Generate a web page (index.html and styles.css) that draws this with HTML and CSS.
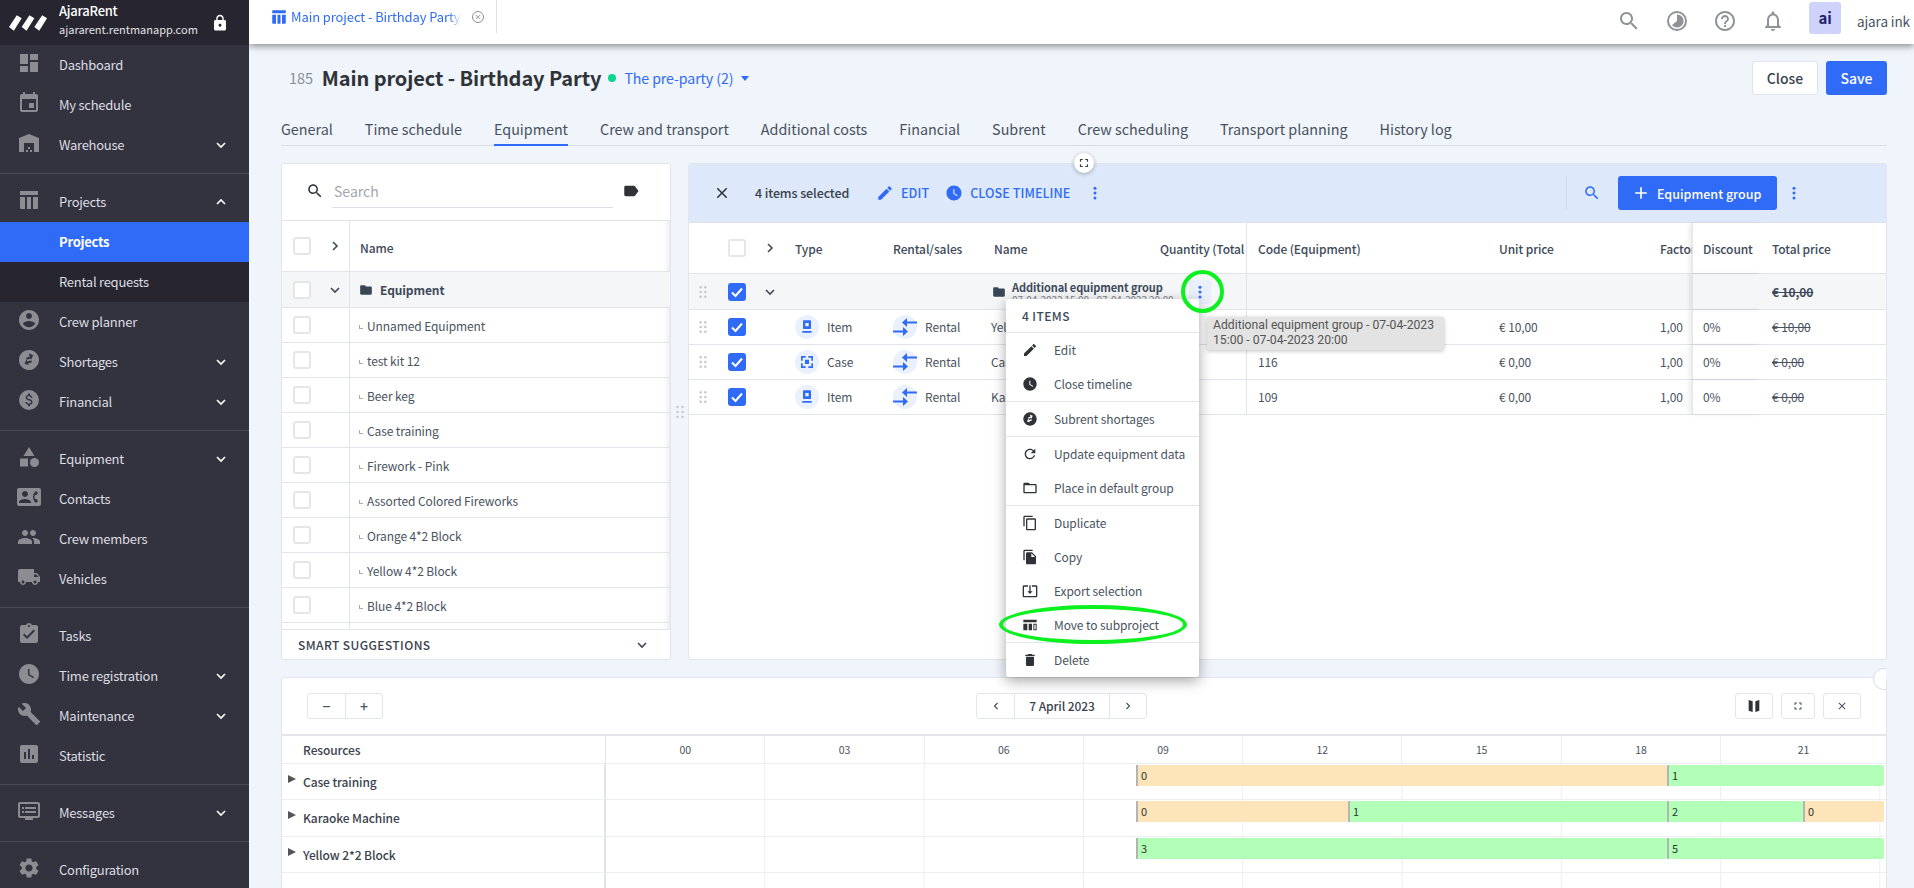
FILE: index.html
```html
<!DOCTYPE html>
<html lang="en">
<head>
    <meta charset="UTF-8">
    <meta name="viewport" content="width=device-width, initial-scale=1.0">
    <link rel="stylesheet" href="styles.css">
    <title>Main project - Birthday Party</title>
</head>
<body>
    <!-- icon sprite -->
    <svg class="sprite" xmlns="http://www.w3.org/2000/svg">
        <symbol id="i-dashboard" viewBox="0 0 24 24"><path d="M3 13h8V3H3v10zm0 8h8v-6H3v6zm10 0h8V11h-8v10zm0-18v6h8V3h-8z"/></symbol>
        <symbol id="i-event" viewBox="0 0 24 24"><path d="M17 12h-5v5h5v-5zM16 1v2H8V1H6v2H5c-1.11 0-1.99.9-1.99 2L3 19c0 1.1.89 2 2 2h14c1.1 0 2-.9 2-2V5c0-1.1-.9-2-2-2h-1V1h-2zm3 18H5V8h14v11z"/></symbol>
        <symbol id="i-warehouse" viewBox="0 0 24 24"><path d="M22 21V7L12 3 2 7v14h5v-9h10v9h5zm-11-2H9v2h2v-2zm2-3h-2v2h2v-2zm2 3h-2v2h2v-2z"/></symbol>
        <symbol id="i-projects" viewBox="0 0 24 24"><path d="M3 3h18v4H3zM3 9h5v12H4a1 1 0 0 1-1-1zM10 9h4v12h-4zM16 9h5v11a1 1 0 0 1-1 1h-4z"/></symbol>
        <symbol id="i-person" viewBox="0 0 24 24"><path d="M12 2C6.48 2 2 6.48 2 12s4.48 10 10 10 10-4.48 10-10S17.52 2 12 2zm0 3c1.66 0 3 1.34 3 3s-1.34 3-3 3-3-1.34-3-3 1.34-3 3-3zm0 14.2c-2.5 0-4.71-1.28-6-3.22.03-1.99 4-3.08 6-3.08 1.99 0 5.97 1.09 6 3.08-1.29 1.94-3.5 3.22-6 3.22z"/></symbol>
        <symbol id="i-swap" viewBox="0 0 24 24"><path transform="rotate(-20 12 12)" d="M12 2C6.48 2 2 6.48 2 12s4.48 10 10 10 10-4.48 10-10S17.52 2 12 2zm2 3.5l3.5 3.5-3.5 3.5V11h-4V9h4V6.5zm-4 11L6.5 14l3.5-3.5V13h4v2h-4v2.5z"/></symbol>
        <symbol id="i-money" viewBox="0 0 24 24"><path fill-rule="evenodd" d="M12 2a10 10 0 1 0 0 20 10 10 0 0 0 0-20zm1 3.6v1.5c1.5.4 2.3 1.5 2.4 2.7h-1.6c0-.9-.5-1.5-1.8-1.5-1.2 0-1.9.5-1.9 1.3 0 .7.5 1.1 2.1 1.5 1.6.4 3.3 1.1 3.3 3.1 0 1.4-1.1 2.2-2.5 2.5v1.5h-2v-1.5c-1.4-.3-2.5-1.2-2.6-2.7h1.6c.1.8.7 1.5 2.1 1.5 1.6 0 1.9-.8 1.9-1.3 0-.7-.4-1.3-2.1-1.7-1.9-.5-3.3-1.3-3.3-2.9 0-1.4 1.1-2.3 2.4-2.6V5.600z"/></symbol>
        <symbol id="i-category" viewBox="0 0 24 24"><path d="M12 2l-5.500 9h11z"/><circle cx="17.500" cy="17.500" r="4.500"/><path d="M3 13.500h8v8H3z"/></symbol>
        <symbol id="i-contact" viewBox="0 0 24 24"><path d="M22 3H2C.9 3 0 3.900 0 5v14c0 1.100.9 2 2 2h20c1.100 0 1.990-.9 1.990-2L24 5c0-1.100-.9-2-2-2zM8 6c1.660 0 3 1.340 3 3s-1.340 3-3 3-3-1.340-3-3 1.340-3 3-3zm6 12H2v-1c0-2 4-3.100 6-3.100s6 1.100 6 3.100v1zm3.850-4h1.640L21 16l-1.990 1.990c-1.310-.98-2.280-2.380-2.730-3.990-.18-.64-.28-1.310-.28-2s.1-1.360.28-2c.45-1.620 1.420-3.010 2.730-3.990L21 8l-1.510 2h-1.640c-.22.63-.35 1.300-.35 2s.13 1.370.35 2z"/></symbol>
        <symbol id="i-people" viewBox="0 0 24 24"><path d="M16 11c1.660 0 2.990-1.340 2.990-3S17.660 5 16 5c-1.660 0-3 1.340-3 3s1.340 3 3 3zm-8 0c1.660 0 2.990-1.340 2.990-3S9.660 5 8 5C6.340 5 5 6.340 5 8s1.340 3 3 3zm0 2c-2.330 0-7 1.170-7 3.500V19h14v-2.500c0-2.330-4.670-3.500-7-3.500zm8 0c-.29 0-.62.02-.97.05 1.160.84 1.970 1.970 1.970 3.450V19h6v-2.500c0-2.330-4.670-3.500-7-3.500z"/></symbol>
        <symbol id="i-truck" viewBox="0 0 24 24"><path d="M20 8h-3V4H3c-1.100 0-2 .9-2 2v11h2c0 1.660 1.340 3 3 3s3-1.340 3-3h6c0 1.660 1.340 3 3 3s3-1.340 3-3h2v-5l-3-4zM6 18.500c-.83 0-1.500-.67-1.500-1.500s.67-1.500 1.500-1.500 1.500.67 1.500 1.500-.67 1.500-1.500 1.500zm13.500-9l1.960 2.500H17V9.500h2.500zm-1.500 9c-.83 0-1.500-.67-1.500-1.500s.67-1.500 1.500-1.500 1.500.67 1.500 1.500-.67 1.500-1.500 1.500z"/></symbol>
        <symbol id="i-task" viewBox="0 0 24 24"><path d="M19 3h-4.180C14.400 1.840 13.300 1 12 1c-1.300 0-2.400.84-2.820 2H5c-1.100 0-2 .9-2 2v14c0 1.100.9 2 2 2h14c1.100 0 2-.9 2-2V5c0-1.100-.9-2-2-2zm-7 0c.55 0 1 .45 1 1s-.45 1-1 1-1-.45-1-1 .45-1 1-1zm-2 14l-4-4 1.410-1.410L10 14.170l6.590-6.590L18 9l-8 8z"/></symbol>
        <symbol id="i-clock" viewBox="0 0 24 24"><path d="M12 2C6.500 2 2 6.500 2 12s4.500 10 10 10 10-4.500 10-10S17.500 2 12 2zm4.200 14.200L11 13V7h1.500v5.200l4.500 2.700-.8 1.300z"/></symbol>
        <symbol id="i-wrench" viewBox="0 0 24 24"><path d="M22.700 19l-9.100-9.100c.9-2.300.4-5-1.500-6.900-2-2-5-2.400-7.400-1.300L9 6 6 9 1.600 4.700C.4 7.100.9 10.100 2.900 12.100c1.900 1.900 4.600 2.400 6.900 1.500l9.100 9.100c.4.4 1 .4 1.400 0l2.300-2.300c.5-.4.5-1.100.1-1.400z"/></symbol>
        <symbol id="i-chart" viewBox="0 0 24 24"><path d="M19 3H5c-1.100 0-2 .9-2 2v14c0 1.100.9 2 2 2h14c1.100 0 2-.9 2-2V5c0-1.100-.9-2-2-2zM9 17H7v-7h2v7zm4 0h-2V7h2v10zm4 0h-2v-4h2v4z"/></symbol>
        <symbol id="i-messages" viewBox="0 0 24 24"><path d="M21 3H3c-1.100 0-2 .9-2 2v12c0 1.100.9 2 2 2h5v2h8v-2h5c1.100 0 1.990-.9 1.990-2L23 5c0-1.100-.9-2-2-2zm0 14H3V5h18v12zM19 8H8v2h11V8zm0 4H8v2h11v-2zM7 8H5v2h2V8zm0 4H5v2h2v-2z"/></symbol>
        <symbol id="i-settings" viewBox="0 0 24 24"><path d="M19.140 12.940c.04-.3.06-.61.06-.94 0-.32-.02-.64-.07-.94l2.030-1.580c.18-.14.23-.41.12-.61l-1.920-3.320c-.12-.22-.37-.29-.59-.22l-2.390.96c-.5-.38-1.030-.7-1.620-.94l-.36-2.540c-.04-.24-.24-.41-.48-.41h-3.840c-.24 0-.43.17-.47.41l-.36 2.540c-.59.24-1.130.57-1.620.94l-2.390-.96c-.22-.08-.47 0-.59.22L2.740 8.870c-.12.21-.08.47.12.61l2.030 1.580c-.05.3-.09.63-.09.94s.02.64.07.94l-2.030 1.580c-.18.14-.23.41-.12.61l1.920 3.320c.12.22.37.29.59.22l2.390-.96c.5.38 1.030.7 1.620.94l.36 2.540c.05.24.24.41.48.41h3.840c.24 0 .44-.17.47-.41l.36-2.540c.59-.24 1.130-.56 1.620-.94l2.390.96c.22.08.47 0 .59-.22l1.920-3.320c.12-.22.07-.47-.12-.61l-2.010-1.580zM12 15.600c-1.980 0-3.600-1.620-3.600-3.600s1.620-3.600 3.600-3.600 3.600 1.620 3.600 3.600-1.620 3.600-3.600 3.600z"/></symbol>
        <symbol id="i-lock" viewBox="0 0 24 24"><path d="M18 8h-1V6c0-2.760-2.240-5-5-5S7 3.240 7 6v2H6c-1.100 0-2 .9-2 2v10c0 1.100.9 2 2 2h12c1.100 0 2-.9 2-2V10c0-1.100-.9-2-2-2zm-6 9c-1.100 0-2-.9-2-2s.9-2 2-2 2 .9 2 2-.9 2-2 2zm3.100-9H8.900V6c0-1.710 1.390-3.100 3.100-3.100 1.710 0 3.100 1.390 3.100 3.100v2z"/></symbol>
        <symbol id="i-search" viewBox="0 0 24 24"><path d="M15.500 14h-.79l-.28-.27C15.410 12.590 16 11.110 16 9.500 16 5.910 13.090 3 9.500 3S3 5.910 3 9.500 5.910 16 9.500 16c1.610 0 3.090-.59 4.230-1.570l.27.28v.79l5 4.990L20.490 19l-4.990-5zm-6 0C7.010 14 5 11.990 5 9.500S7.010 5 9.500 5 14 7.010 14 9.500 11.990 14 9.500 14z"/></symbol>
        <symbol id="i-edit" viewBox="0 0 24 24"><path d="M3 17.250V21h3.750L17.810 9.940l-3.750-3.750L3 17.250zM20.710 7.040c.39-.39.39-1.020 0-1.410l-2.340-2.340c-.39-.39-1.020-.39-1.410 0l-1.830 1.830 3.750 3.750 1.830-1.830z"/></symbol>
        <symbol id="i-refresh" viewBox="0 0 24 24"><path d="M17.650 6.350C16.200 4.900 14.210 4 12 4c-4.420 0-7.990 3.580-7.990 8s3.570 8 7.990 8c3.730 0 6.840-2.550 7.730-6h-2.080c-.82 2.330-3.040 4-5.650 4-3.310 0-6-2.690-6-6s2.690-6 6-6c1.660 0 3.140.69 4.220 1.780L13 11h7V4l-2.350 2.350z"/></symbol>
        <symbol id="i-folder-line" viewBox="0 0 24 24"><path d="M20 6h-8l-2-2H4c-1.100 0-1.990.9-1.990 2L2 18c0 1.100.9 2 2 2h16c1.100 0 2-.9 2-2V8c0-1.100-.9-2-2-2zm0 12H4V8h16v10z"/></symbol>
        <symbol id="i-folder" viewBox="0 0 24 24"><path d="M10 4H4c-1.100 0-1.990.9-1.990 2L2 18c0 1.100.9 2 2 2h16c1.100 0 2-.9 2-2V8c0-1.100-.9-2-2-2h-8l-2-2z"/></symbol>
        <symbol id="i-duplicate" viewBox="0 0 24 24"><path d="M16 1H4c-1.100 0-2 .9-2 2v14h2V3h12V1zm3 4H8c-1.100 0-2 .9-2 2v14c0 1.100.9 2 2 2h11c1.100 0 2-.9 2-2V7c0-1.100-.9-2-2-2zm0 16H8V7h11v14z"/></symbol>
        <symbol id="i-copy" viewBox="0 0 24 24"><path d="M16 1H4c-1.100 0-2 .9-2 2v14h2V3h12V1zm-1 4l6 6v10c0 1.100-.9 2-2 2H7.990C6.890 23 6 22.100 6 21l.01-14c0-1.100.89-2 1.990-2h7zm-1 7h5.500L14 6.500V12z"/></symbol>
        <symbol id="i-export" viewBox="0 0 24 24"><path d="M12 16.500l4-4h-3v-9h-2v9H8l4 4zm9-13h-6v1.990h6v14.030H3V5.490h6V3.500H3c-1.100 0-2 .9-2 2v14c0 1.100.9 2 2 2h18c1.100 0 2-.9 2-2v-14c0-1.100-.9-2-2-2z"/></symbol>
        <symbol id="i-subproject" viewBox="0 0 24 24"><path fill-rule="evenodd" d="M2 4h20v4H2zM2 10h6v10H2zM10 10h5v10h-5zM17 10h5v10h-5zm1.500 1.500v7h2v-7z"/></symbol>
        <symbol id="i-delete" viewBox="0 0 24 24"><path d="M6 19c0 1.100.9 2 2 2h8c1.100 0 2-.9 2-2V7H6v12zM19 4h-3.500l-1-1h-5l-1 1H5v2h14V4z"/></symbol>
        <symbol id="i-help" viewBox="0 0 24 24"><path d="M11 18h2v-2h-2v2zm1-16C6.480 2 2 6.480 2 12s4.480 10 10 10 10-4.480 10-10S17.520 2 12 2zm0 18c-4.410 0-8-3.590-8-8s3.590-8 8-8 8 3.590 8 8-3.590 8-8 8zm0-14c-2.210 0-4 1.790-4 4h2c0-1.100.9-2 2-2s2 .9 2 2c0 2-3 1.750-3 5h2c0-2.250 3-2.500 3-5 0-2.210-1.790-4-4-4z"/></symbol>
        <symbol id="i-bell" viewBox="0 0 24 24"><path d="M12 22c1.100 0 2-.9 2-2h-4c0 1.100.89 2 2 2zm6-6v-5c0-3.070-1.640-5.640-4.500-6.320V4c0-.83-.67-1.500-1.500-1.500s-1.500.67-1.500 1.500v.68C7.630 5.360 6 7.920 6 11v5l-2 2v1h16v-1l-2-2zm-2 1H8v-6c0-2.480 1.510-4.500 4-4.500s4 2.020 4 4.500v6z"/></symbol>
        <symbol id="i-contrast" viewBox="0 0 24 24"><path fill-rule="evenodd" d="M12 2a10 10 0 1 0 0 20 10 10 0 0 0 0-20zm0 2a8 8 0 1 1 0 16 8 8 0 0 1 0-16z"/><path d="M12 5.500a6.500 6.500 0 1 1-5 10.600l5-4.100z"/></symbol>
        <symbol id="i-close" viewBox="0 0 24 24"><path d="M19 6.410L17.590 5 12 10.590 6.410 5 5 6.410 10.590 12 5 17.590 6.410 19 12 13.410 17.590 19 19 17.590 13.410 12z"/></symbol>
        <symbol id="i-tag" viewBox="0 0 24 24"><path d="M17.630 5.840C17.270 5.330 16.670 5 16 5L5 5.010C3.900 5.010 3 5.900 3 7v10c0 1.100.9 1.990 2 1.990L16 19c.67 0 1.270-.33 1.630-.84L22 12l-4.370-6.160z"/></symbol>
        <symbol id="i-fullscreen" viewBox="0 0 24 24"><path d="M7 14H5v5h5v-2H7v-3zm-2-4h2V7h3V5H5v5zm12 7h-3v2h5v-5h-2v3zM14 5v2h3v3h2V5h-5z"/></symbol>
        <symbol id="i-map" viewBox="0 0 24 24"><path d="M4 3l6 2v16l-6-2zM20 3l-6 2v16l6-2z"/></symbol>
        <symbol id="i-plus" viewBox="0 0 24 24"><path d="M19 13h-6v6h-2v-6H5v-2h6V5h2v6h6v2z"/></symbol>
        <symbol id="i-kebab" viewBox="0 0 24 24"><circle cx="12" cy="5.500" r="2"/><circle cx="12" cy="12" r="2"/><circle cx="12" cy="18.500" r="2"/></symbol>
        <symbol id="i-grip" viewBox="0 0 12 18"><circle cx="3" cy="3" r="1.600"/><circle cx="9" cy="3" r="1.600"/><circle cx="3" cy="9" r="1.600"/><circle cx="9" cy="9" r="1.600"/><circle cx="3" cy="15" r="1.600"/><circle cx="9" cy="15" r="1.600"/></symbol>
        <symbol id="i-down" viewBox="0 0 24 24"><path d="M6 9l6 6 6-6" fill="none" stroke="currentColor" stroke-width="2.400"/></symbol>
        <symbol id="i-up" viewBox="0 0 24 24"><path d="M6 15l6-6 6 6" fill="none" stroke="currentColor" stroke-width="2.400"/></symbol>
        <symbol id="i-right" viewBox="0 0 24 24"><path d="M9 6l6 6-6 6" fill="none" stroke="currentColor" stroke-width="2.400"/></symbol>
        <symbol id="i-left" viewBox="0 0 24 24"><path d="M15 6l-6 6 6 6" fill="none" stroke="currentColor" stroke-width="2.400"/></symbol>
        <symbol id="i-check" viewBox="0 0 18 18"><path d="M4 9.500l3.500 3.500L14 5.500" fill="none" stroke="#fff" stroke-width="2"/></symbol>
        <symbol id="i-item" viewBox="0 0 24 24"><path fill-rule="evenodd" d="M7 2h10a1 1 0 0 1 1 1v11a1 1 0 0 1-1 1H7a1 1 0 0 1-1-1V3a1 1 0 0 1 1-1zm2.500 4v5h5V6zM5 18h14v2.500H5z"/></symbol>
        <symbol id="i-case" viewBox="0 0 24 24"><path d="M3 3h7v2.500H5.500V10H3zM14 3h7v7h-2.500V5.500H14zM3 14h2.500v4.500H10V21H3zM18.500 14H21v7h-7v-2.500h4.500zM9 8.500h6V15H9z"/></symbol>
        <symbol id="i-rental" viewBox="0 0 24 24"><path d="M0 15.500h10V12l5 4.500-5 4.500v-3.500H0z"/><path d="M24 6.500H14V3L9 7.500l5 4.500V8.500h10z"/></symbol>
    </svg>

    <div class="sidebar">
        <div class="brand">
            <svg class="brand-logo" viewBox="0 0 40 16"><polygon points="0,12 8,0 13,3 5,16"/><polygon points="13,12 21,0 26,3 18,16"/><polygon points="26,12 34,0 39,3 31,16"/></svg>
            <div class="brand-text">
                <div class="brand-name">AjaraRent</div>
                <div class="brand-url">ajararent.rentmanapp.com</div>
            </div>
            <svg class="brand-lock"><use href="#i-lock"/></svg>
        </div>

        <div class="nav-group first">
            <div class="nav-item"><svg class="nav-icon"><use href="#i-dashboard"/></svg>Dashboard</div>
            <div class="nav-item"><svg class="nav-icon"><use href="#i-event"/></svg>My schedule</div>
            <div class="nav-item"><svg class="nav-icon"><use href="#i-warehouse"/></svg>Warehouse<svg class="nav-arrow"><use href="#i-down"/></svg></div>
        </div>
        <div class="nav-group">
            <div class="nav-item"><svg class="nav-icon"><use href="#i-projects"/></svg>Projects<svg class="nav-arrow"><use href="#i-up"/></svg></div>
            <div class="nav-item sub active">Projects</div>
            <div class="nav-item sub">Rental requests</div>
            <div class="nav-item"><svg class="nav-icon"><use href="#i-person"/></svg>Crew planner</div>
            <div class="nav-item"><svg class="nav-icon"><use href="#i-swap"/></svg>Shortages<svg class="nav-arrow"><use href="#i-down"/></svg></div>
            <div class="nav-item"><svg class="nav-icon"><use href="#i-money"/></svg>Financial<svg class="nav-arrow"><use href="#i-down"/></svg></div>
        </div>
        <div class="nav-group">
            <div class="nav-item"><svg class="nav-icon"><use href="#i-category"/></svg>Equipment<svg class="nav-arrow"><use href="#i-down"/></svg></div>
            <div class="nav-item"><svg class="nav-icon"><use href="#i-contact"/></svg>Contacts</div>
            <div class="nav-item"><svg class="nav-icon"><use href="#i-people"/></svg>Crew members</div>
            <div class="nav-item"><svg class="nav-icon"><use href="#i-truck"/></svg>Vehicles</div>
        </div>
        <div class="nav-group">
            <div class="nav-item"><svg class="nav-icon"><use href="#i-task"/></svg>Tasks</div>
            <div class="nav-item"><svg class="nav-icon"><use href="#i-clock"/></svg>Time registration<svg class="nav-arrow"><use href="#i-down"/></svg></div>
            <div class="nav-item"><svg class="nav-icon"><use href="#i-wrench"/></svg>Maintenance<svg class="nav-arrow"><use href="#i-down"/></svg></div>
            <div class="nav-item"><svg class="nav-icon"><use href="#i-chart"/></svg>Statistic</div>
        </div>
        <div class="nav-group">
            <div class="nav-item"><svg class="nav-icon"><use href="#i-messages"/></svg>Messages<svg class="nav-arrow"><use href="#i-down"/></svg></div>
        </div>
        <div class="nav-group">
            <div class="nav-item"><svg class="nav-icon"><use href="#i-settings"/></svg>Configuration</div>
        </div>
    </div>

    <div class="main">
        <div class="topbar">
            <div class="tab">
                <svg class="tab-icon"><use href="#i-projects"/></svg>
                <span class="tab-title">Main project - Birthday Party</span>
                <span class="tab-close"><svg><use href="#i-close"/></svg></span>
            </div>
            <div class="topbar-right">
                <svg class="top-icon"><use href="#i-search"/></svg>
                <svg class="top-icon"><use href="#i-contrast"/></svg>
                <svg class="top-icon"><use href="#i-help"/></svg>
                <svg class="top-icon"><use href="#i-bell"/></svg>
                <div class="avatar">ai</div>
                <div class="user-name">ajara ink</div>
            </div>
        </div>

        <div class="content">
            <div class="title-row">
                <span class="project-no">185</span>
                <span class="project-title">Main project - Birthday Party</span>
                <span class="status-dot"></span>
                <span class="subproject">The pre-party (2)</span>
                <span class="caret"></span>
                <div class="title-actions">
                    <button class="btn">Close</button>
                    <button class="btn primary">Save</button>
                </div>
            </div>

            <div class="tabs">
                <div class="tabs-item">General</div>
                <div class="tabs-item">Time schedule</div>
                <div class="tabs-item active">Equipment</div>
                <div class="tabs-item">Crew and transport</div>
                <div class="tabs-item">Additional costs</div>
                <div class="tabs-item">Financial</div>
                <div class="tabs-item">Subrent</div>
                <div class="tabs-item">Crew scheduling</div>
                <div class="tabs-item">Transport planning</div>
                <div class="tabs-item">History log</div>
            </div>

            <div class="panels">
                <div class="panel catalog">
                    <div class="catalog-search">
                        <svg class="catalog-search-icon"><use href="#i-search"/></svg>
                        <input class="catalog-input" type="text" placeholder="Search">
                        <svg class="catalog-tag"><use href="#i-tag"/></svg>
                    </div>
                    <div class="catalog-table">
                        <div class="c-row head">
                            <div class="c-check"><span class="checkbox"></span><svg class="chev"><use href="#i-right"/></svg></div>
                            <div class="c-name">Name</div>
                        </div>
                        <div class="c-row group">
                            <div class="c-check"><span class="checkbox"></span><svg class="chev"><use href="#i-down"/></svg></div>
                            <div class="c-name"><svg class="folder"><use href="#i-folder"/></svg>Equipment</div>
                        </div>
                        <div class="c-row"><div class="c-check"><span class="checkbox"></span></div><div class="c-name"><span class="elbow"></span>Unnamed Equipment</div></div>
                        <div class="c-row"><div class="c-check"><span class="checkbox"></span></div><div class="c-name"><span class="elbow"></span>test kit 12</div></div>
                        <div class="c-row"><div class="c-check"><span class="checkbox"></span></div><div class="c-name"><span class="elbow"></span>Beer keg</div></div>
                        <div class="c-row"><div class="c-check"><span class="checkbox"></span></div><div class="c-name"><span class="elbow"></span>Case training</div></div>
                        <div class="c-row"><div class="c-check"><span class="checkbox"></span></div><div class="c-name"><span class="elbow"></span>Firework - Pink</div></div>
                        <div class="c-row"><div class="c-check"><span class="checkbox"></span></div><div class="c-name"><span class="elbow"></span>Assorted Colored Fireworks</div></div>
                        <div class="c-row"><div class="c-check"><span class="checkbox"></span></div><div class="c-name"><span class="elbow"></span>Orange 4*2 Block</div></div>
                        <div class="c-row"><div class="c-check"><span class="checkbox"></span></div><div class="c-name"><span class="elbow"></span>Yellow 4*2 Block</div></div>
                        <div class="c-row"><div class="c-check"><span class="checkbox"></span></div><div class="c-name"><span class="elbow"></span>Blue 4*2 Block</div></div>
                        <div class="c-row"><div class="c-check"></div><div class="c-name"></div></div>
                    </div>
                    <div class="suggestions">SMART SUGGESTIONS<svg class="chev"><use href="#i-down"/></svg></div>
                </div>

                <div class="panel selection">
                    <div class="select-bar">
                        <svg class="select-x"><use href="#i-close"/></svg>
                        <span class="select-count">4 items selected</span>
                        <svg class="link-icon"><use href="#i-edit"/></svg><span class="link-text">EDIT</span>
                        <svg class="link-icon clock"><use href="#i-clock"/></svg><span class="link-text">CLOSE TIMELINE</span>
                        <svg class="kebab bar-kebab"><use href="#i-kebab"/></svg>
                        <div class="select-bar-right">
                            <svg class="link-icon"><use href="#i-search"/></svg>
                            <button class="btn add-group"><svg><use href="#i-plus"/></svg>Equipment group</button>
                            <svg class="kebab"><use href="#i-kebab"/></svg>
                        </div>
                    </div>

                    <div class="t-row t-head">
                        <div class="t-lead"><span class="checkbox"></span><svg class="chev"><use href="#i-right"/></svg></div>
                        <div>Type</div>
                        <div>Rental/sales</div>
                        <div class="t-pad">Name</div>
                        <div class="t-qty">Quantity (Total in project)</div>
                        <div class="t-code">Code (Equipment)</div>
                        <div class="t-unit">Unit price</div>
                        <div class="t-factor">Factor</div>
                        <div class="t-disc">Discount</div>
                        <div class="t-total">Total price</div>
                    </div>

                    <div class="t-row t-group">
                        <div class="t-lead"><svg class="grip"><use href="#i-grip"/></svg><span class="checkbox on"><svg><use href="#i-check"/></svg></span><svg class="chev"><use href="#i-down"/></svg></div>
                        <div></div>
                        <div></div>
                        <div class="t-groupname">
                            <svg class="folder"><use href="#i-folder"/></svg>
                            <div>
                                <div class="group-title">Additional equipment group</div>
                                <div class="group-date">07-04-2023 15:00 - 07-04-2023 20:00</div>
                            </div>
                        </div>
                        <div class="t-qty"><span class="row-kebab"><svg class="kebab"><use href="#i-kebab"/></svg></span></div>
                        <div class="t-code"></div>
                        <div class="t-unit"></div>
                        <div class="t-factor"></div>
                        <div class="t-disc"></div>
                        <div class="t-total"><s>€ 10,00</s></div>
                    </div>

                    <div class="t-row">
                        <div class="t-lead"><svg class="grip"><use href="#i-grip"/></svg><span class="checkbox on"><svg><use href="#i-check"/></svg></span></div>
                        <div class="t-icon-cell"><span class="round"><svg><use href="#i-item"/></svg></span>Item</div>
                        <div class="t-icon-cell"><span class="round"><svg class="rental"><use href="#i-rental"/></svg></span>Rental</div>
                        <div>Yellow 2*2 Block</div>
                        <div class="t-qty"></div>
                        <div class="t-code"></div>
                        <div class="t-unit">€ 10,00</div>
                        <div class="t-factor">1,00</div>
                        <div class="t-disc">0%</div>
                        <div class="t-total"><s>€ 10,00</s></div>
                    </div>
                    <div class="t-row">
                        <div class="t-lead"><svg class="grip"><use href="#i-grip"/></svg><span class="checkbox on"><svg><use href="#i-check"/></svg></span></div>
                        <div class="t-icon-cell"><span class="round"><svg><use href="#i-case"/></svg></span>Case</div>
                        <div class="t-icon-cell"><span class="round"><svg class="rental"><use href="#i-rental"/></svg></span>Rental</div>
                        <div>Case training</div>
                        <div class="t-qty"></div>
                        <div class="t-code">116</div>
                        <div class="t-unit">€ 0,00</div>
                        <div class="t-factor">1,00</div>
                        <div class="t-disc">0%</div>
                        <div class="t-total"><s>€ 0,00</s></div>
                    </div>
                    <div class="t-row">
                        <div class="t-lead"><svg class="grip"><use href="#i-grip"/></svg><span class="checkbox on"><svg><use href="#i-check"/></svg></span></div>
                        <div class="t-icon-cell"><span class="round"><svg><use href="#i-item"/></svg></span>Item</div>
                        <div class="t-icon-cell"><span class="round"><svg class="rental"><use href="#i-rental"/></svg></span>Rental</div>
                        <div>Karaoke Machine</div>
                        <div class="t-qty"></div>
                        <div class="t-code">109</div>
                        <div class="t-unit">€ 0,00</div>
                        <div class="t-factor">1,00</div>
                        <div class="t-disc">0%</div>
                        <div class="t-total"><s>€ 0,00</s></div>
                    </div>
                </div>
            </div>

            <div class="panel timeline">
                <div class="timeline-tools">
                    <div class="btn-group">
                        <span class="tool">&minus;</span>
                        <span class="tool">+</span>
                    </div>
                    <div class="btn-group date-group">
                        <span class="tool"><svg><use href="#i-left"/></svg></span>
                        <span class="tool date">7 April 2023</span>
                        <span class="tool"><svg><use href="#i-right"/></svg></span>
                    </div>
                    <div class="tools-right">
                        <span class="tool single"><svg class="dark"><use href="#i-map"/></svg></span>
                        <span class="tool single narrow"><svg><use href="#i-fullscreen"/></svg></span>
                        <span class="tool single"><svg><use href="#i-close"/></svg></span>
                    </div>
                </div>
                <div class="g-row g-head">
                    <div class="g-res">Resources</div>
                    <div class="g-hours">
                        <span>00</span><span>03</span><span>06</span><span>09</span><span>12</span><span>15</span><span>18</span><span>21</span>
                    </div>
                </div>
                <div class="g-row">
                    <div class="g-res"><i class="tri"></i>Case training</div>
                    <div class="g-lane">
                        <div class="bar low" style="width:531px">0</div>
                        <div class="bar ok last">1</div>
                    </div>
                </div>
                <div class="g-row tall">
                    <div class="g-res"><i class="tri"></i>Karaoke Machine</div>
                    <div class="g-lane">
                        <div class="bar low" style="width:212px">0</div>
                        <div class="bar ok" style="width:319px">1</div>
                        <div class="bar ok" style="width:136px">2</div>
                        <div class="bar low last">0</div>
                    </div>
                </div>
                <div class="g-row">
                    <div class="g-res"><i class="tri"></i>Yellow 2*2 Block</div>
                    <div class="g-lane">
                        <div class="bar ok" style="width:531px">3</div>
                        <div class="bar ok last">5</div>
                    </div>
                </div>
                <div class="g-row">
                    <div class="g-res"></div>
                    <div class="g-lane"></div>
                </div>
            </div>
        </div>

        <!-- overlays -->
        <span class="expand-btn"><svg><use href="#i-fullscreen"/></svg></span>
        <span class="corner-btn"></span>
        <svg class="resize-grip"><use href="#i-grip"/></svg>

        <div class="menu">
            <div class="menu-title">4 ITEMS</div>
            <div class="menu-section">
                <div class="menu-item"><svg><use href="#i-edit"/></svg>Edit</div>
                <div class="menu-item"><svg><use href="#i-clock"/></svg>Close timeline</div>
            </div>
            <div class="menu-section">
                <div class="menu-item"><svg><use href="#i-swap"/></svg>Subrent shortages</div>
            </div>
            <div class="menu-section">
                <div class="menu-item"><svg><use href="#i-refresh"/></svg>Update equipment data</div>
                <div class="menu-item"><svg><use href="#i-folder-line"/></svg>Place in default group</div>
            </div>
            <div class="menu-section">
                <div class="menu-item"><svg><use href="#i-duplicate"/></svg>Duplicate</div>
                <div class="menu-item"><svg><use href="#i-copy"/></svg>Copy</div>
                <div class="menu-item"><svg><use href="#i-export"/></svg>Export selection</div>
                <div class="menu-item"><svg><use href="#i-subproject"/></svg>Move to subproject</div>
            </div>
            <div class="menu-section">
                <div class="menu-item"><svg><use href="#i-delete"/></svg>Delete</div>
            </div>
        </div>

        <div class="tooltip">Additional equipment group - 07-04-2023<br>15:00 - 07-04-2023 20:00</div>

        <span class="mark mark-kebab"></span>
        <span class="mark mark-move"></span>
    </div>
</body>
</html>
```

FILE: styles.css
```css
* {
    box-sizing: border-box;
}

body {
    margin: 0;
    display: flex;
    height: 100vh;
    overflow: hidden;
    font-family: "Noto Sans CJK SC", "Noto Sans", sans-serif;
    font-size: 12px;
    letter-spacing: -0.1px;
    line-height: 20px;
    color: #4a5360;
    background-color: #f0f4fb;
}

svg {
    fill: currentColor;
}

.sprite {
    display: none;
}

/* sidebar */

.sidebar {
    flex: 0 0 249px;
    min-width: 0;
    height: 888px;
    background-color: #33333f;
    color: #dcdce2;
    font-size: 13px;
    letter-spacing: -0.25px;
    position: relative;
    z-index: 5;
}

.brand {
    display: flex;
    align-items: center;
    height: 45px;
    padding: 0 20px 0 9px;
    background-color: #272630;
    color: #fff;
}

.brand-logo {
    flex: none;
    width: 39px;
    height: 16px;
    fill: #fff;
    margin: 0 11px 0 0;
}

.brand-text {
    flex: 1;
    min-width: 0;
    margin-top: -5px;
}

.brand-name {
    font-weight: 500;
    line-height: 17px;
}

.brand-url {
    font-size: 11px;
    line-height: 20px;
    letter-spacing: 0;
    color: #e2e2e6;
}

.brand-lock {
    flex: none;
    width: 18px;
    height: 18px;
}

.nav-group {
    padding: 8px 0;
    border-bottom: 1px solid #4b4b57;
}

.nav-group.first {
    padding-top: 0;
}

.nav-group:last-child {
    border-bottom: none;
}

.nav-item {
    display: flex;
    align-items: center;
    height: 40px;
    padding-left: 59px;
    position: relative;
}

.nav-item.sub {
    background-color: #272630;
}

.nav-item.active {
    background-color: #2f6bf6;
    color: #fff;
    font-weight: 700;
}

.nav-icon {
    position: absolute;
    left: 17px;
    top: 6px;
    width: 24px;
    height: 24px;
    color: #8c8c92;
}

.nav-arrow {
    position: absolute;
    left: 213px;
    top: 12px;
    width: 16px;
    height: 16px;
    color: #fff;
}

/* top bar */

.main {
    flex: 1;
    display: flex;
    flex-direction: column;
    position: relative;
    min-width: 0;
    height: 888px;
    overflow: hidden;
}

.topbar {
    flex: 0 0 44px;
    display: flex;
    align-items: center;
    background-color: #fff;
    box-shadow: 0 2px 7px rgba(0, 0, 0, 0.45);
    position: relative;
    z-index: 4;
}

.tab {
    display: flex;
    align-items: center;
    align-self: flex-start;
    width: 248px;
    height: 33px;
    padding-left: 21px;
    border-right: 1px solid #dfe2e6;
    color: #2f6bf6;
}

.tab-icon {
    flex: none;
    width: 18px;
    height: 18px;
    margin-right: 3px;
}

.tab-title {
    width: 171px;
    white-space: nowrap;
    overflow: hidden;
    font-size: 13px;
    mask-image: linear-gradient(to right, #000 92%, transparent);
}

.tab-close {
    flex: none;
    display: flex;
    align-items: center;
    justify-content: center;
    width: 12px;
    height: 12px;
    margin-left: 10px;
    border: 1px solid #8b8f96;
    border-radius: 50%;
    color: #8b8f96;
}

.tab-close svg {
    width: 8px;
    height: 8px;
}

.topbar-right {
    display: flex;
    align-items: center;
    margin-left: auto;
    padding-right: 7px;
    color: #8f9296;
}

.top-icon {
    width: 24px;
    height: 24px;
    margin-right: 24px;
    margin-top: -3px;
}

.avatar {
    width: 32px;
    height: 32px;
    border-radius: 3px;
    background-color: #cfd3fb;
    color: #221f70;
    font-weight: 700;
    font-size: 15px;
    line-height: 32px;
    text-align: center;
    margin-top: -9px;
}

.user-name {
    width: 50px;
    margin-left: 16px;
    font-size: 13.5px;
    color: #4a5360;
    margin-top: -3px;
    white-space: nowrap;
}

/* project header */

.content {
    padding: 17px 27px 0 32px;
}

.title-row {
    display: flex;
    align-items: center;
    height: 34px;
}

.project-no {
    margin-left: 8px;
    font-size: 14.5px;
    color: #8a8f96;
}

.project-title {
    margin-left: 9px;
    font-size: 20px;
    font-weight: 700;
    color: #2f3338;
}

.status-dot {
    width: 8px;
    height: 8px;
    margin-left: 7px;
    border-radius: 50%;
    background-color: #0bd68b;
}

.subproject {
    margin-left: 8px;
    font-size: 14.2px;
    color: #2f6bf6;
}

.caret {
    margin-left: 8px;
    border-top: 5px solid #2f6bf6;
    border-left: 4px solid transparent;
    border-right: 4px solid transparent;
}

.title-actions {
    display: flex;
    gap: 8px;
    margin-left: auto;
}

.btn {
    height: 34px;
    width: 66px;
    border: 1px solid #e0e3e8;
    border-radius: 3px;
    background-color: #fff;
    font-family: inherit;
    font-size: 14px;
    font-weight: 500;
    color: #3a424d;
}

.btn.primary {
    width: 61px;
    border: none;
    background-color: #2f6bf6;
    color: #fff;
}

.tabs {
    display: flex;
    gap: 32px;
    height: 33px;
    margin-top: 18px;
    border-bottom: 1px solid #d9dce2;
    font-size: 14.34px;
    letter-spacing: 0;
    color: #47505c;
}

.tabs-item {
    height: 33px;
    line-height: 32px;
}

.tabs-item.active {
    border-bottom: 2px solid #2f6bf6;
}

/* panels */

.panels {
    display: flex;
    gap: 17px;
    height: 497px;
    margin-top: 17px;
}

.panel {
    background-color: #fff;
    border: 1px solid #e1e4e9;
    border-radius: 3px;
}

.catalog {
    flex: 0 0 390px;
    display: flex;
    flex-direction: column;
    overflow: hidden;
}

.catalog-search {
    flex: 0 0 57px;
    display: flex;
    align-items: center;
    padding-left: 24px;
    border-bottom: 1px solid #e1e4e9;
}

.catalog-search-icon {
    flex: none;
    width: 18px;
    height: 18px;
    color: #2f3338;
    margin-top: -2px;
}

.catalog-input {
    width: 281px;
    height: 32px;
    margin-left: 8px;
    padding: 0 2px 2px;
    border: none;
    border-bottom: 1px solid #dcdfe4;
    outline: none;
    font-family: inherit;
    font-size: 14px;
    color: #4a5360;
}

.catalog-input::placeholder {
    color: #a4a7ab;
}

.catalog-tag {
    flex: none;
    width: 18px;
    height: 18px;
    margin: -3px 0 0 9px;
    color: #2f3338;
}

.catalog-table {
    flex: 1;
    overflow: hidden;
    box-shadow: inset -6px 0 6px -5px rgba(0, 0, 0, 0.12);
}

.c-row {
    display: flex;
    height: 35px;
    border-bottom: 1px solid #e1e4e9;
}

.c-row.head {
    height: 51px;
    font-weight: 500;
    color: #3e4a5a;
}

.c-row.group {
    height: 36px;
    background-color: #f5f6f8;
    font-weight: 700;
    color: #3e4a5a;
}

.c-check {
    flex: 0 0 68px;
    display: flex;
    align-items: center;
    padding-left: 11px;
    border-right: 1px solid #e1e4e9;
}

.c-name {
    flex: 1;
    display: flex;
    align-items: center;
    padding: 1px 0 0 9px;
}

.head .c-name {
    padding: 3px 0 0 10px;
}

.checkbox {
    flex: none;
    width: 18px;
    height: 18px;
    border: 2px solid #e4e6ea;
    border-radius: 3px;
    background-color: #fff;
}

.checkbox.on {
    border: none;
    background-color: #2f6bf6;
}

.checkbox svg {
    display: block;
    width: 18px;
    height: 18px;
}

.chev {
    flex: none;
    width: 16px;
    height: 16px;
    margin-left: 16px;
    color: #3e4a5a;
}

.folder {
    flex: none;
    width: 14px;
    height: 14px;
    margin-right: 7px;
    color: #3a4656;
}

.elbow {
    flex: none;
    width: 4px;
    height: 4px;
    margin: 2px 4px 0 0;
    border-left: 1px solid #a8acb2;
    border-bottom: 1px solid #a8acb2;
}

.suggestions {
    flex: 0 0 30px;
    display: flex;
    align-items: center;
    justify-content: space-between;
    padding: 0 20px 0 16px;
    border-top: 1px solid #e1e4e9;
    font-weight: 500;
    letter-spacing: 0.4px;
    color: #3a424d;
}

.suggestions .chev {
    margin: 0;
}

.selection {
    flex: 1;
    min-width: 0;
    overflow: hidden;
}

.select-bar {
    display: flex;
    align-items: center;
    height: 59px;
    padding-left: 24px;
    background-color: #dde9fa;
    border-bottom: 1px solid #dfe3e8;
    color: #2f6bf6;
}

.select-x {
    flex: none;
    width: 18px;
    height: 18px;
    color: #2f3338;
}

.select-count {
    margin: 0 25px 0 24px;
    font-weight: 500;
    color: #3a424d;
    width: 96px;
    white-space: nowrap;
    font-size: 12.5px;
}

.link-icon {
    flex: none;
    width: 18px;
    height: 18px;
}

.link-icon.clock {
    margin-left: 16px;
}

.link-text {
    margin-left: 7px;
    font-size: 12.6px;
    font-weight: 500;
    letter-spacing: 0.05px;
}

.kebab {
    flex: none;
    width: 18px;
    height: 18px;
    color: #2f6bf6;
}

.bar-kebab {
    margin-left: 16px;
}

.select-bar-right {
    display: flex;
    align-items: center;
    height: 34px;
    margin-left: auto;
    padding: 0 83px 0 16px;
    border-left: 1px solid #d3dcea;
}

.btn.add-group {
    display: flex;
    align-items: center;
    flex: none;
    width: 159px;
    height: 34px;
    margin: 0 8px 0 17px;
    padding-left: 13px;
    border: none;
    background-color: #2f6bf6;
    color: #fff;
    font-size: 12.5px;
    font-weight: 500;
    white-space: nowrap;
}

.add-group svg {
    flex: none;
    width: 20px;
    height: 20px;
    margin-right: 6px;
}

.t-row {
    display: grid;
    grid-template-columns: 106px 98px 98px 169px 87px 241px 162px 42px 70px 1fr;
    align-items: center;
    height: 35px;
    border-bottom: 1px solid #e1e4e9;
    white-space: nowrap;
}

.t-row > div {
    height: 100%;
    display: flex;
    align-items: center;
    overflow: hidden;
}

.t-head {
    height: 51px;
    font-weight: 500;
    color: #3e4a5a;
}

.t-row.t-head > div:not(.t-lead) {
    padding-top: 2px;
}

.t-group {
    height: 36px;
    background-color: #f5f6f8;
}

.t-row > .t-lead {
    padding-left: 7px;
    overflow: visible;
}

.t-row.t-head > .t-lead {
    padding-left: 39px;
}

.t-lead .grip {
    flex: none;
    width: 14px;
    height: 14px;
    margin-right: 18px;
    color: #c4c7cc;
}

.t-pad {
    padding-left: 3px;
}

.t-qty {
    border-right: 1px solid #e1e4e9;
}

.t-code {
    padding-left: 11px;
}

.t-unit {
    padding-left: 11px;
}

.t-factor {
    padding-left: 10px;
}

.t-row > .t-disc {
    padding-left: 10px;
    border-left: 1px solid #e1e4e9;
    box-shadow: -3px 0 4px rgba(0, 0, 0, 0.08);
    overflow: visible;
}

.t-total {
    padding-left: 10px;
}

.t-group .t-total {
    font-weight: 700;
    color: #3e4a5a;
}

.t-row > .t-groupname {
    overflow: visible;
    padding-left: 1px;
}

.t-groupname .folder {
    margin-right: 6px;
}

.group-title {
    font-size: 11px;
    font-weight: 700;
    line-height: 13px;
    color: #3e4a5a;
    margin-top: 3px;
}

.group-date {
    font-size: 10px;
    line-height: 12px;
    color: #7c838c;
}

.row-kebab {
    flex: none;
    display: flex;
    align-items: center;
    justify-content: center;
    width: 22px;
    height: 24px;
    margin-left: 29px;
    border-radius: 3px;
    background-color: #e9effb;
}

.t-icon-cell {
    gap: 8px;
}

.round {
    flex: none;
    display: flex;
    align-items: center;
    justify-content: center;
    width: 24px;
    height: 24px;
    border-radius: 50%;
    background-color: #eaf1fd;
    color: #2f6bf6;
}

.round svg {
    width: 16px;
    height: 16px;
}

.round svg.rental {
    width: 24px;
    height: 24px;
}

/* timeline */

.timeline {
    margin-top: 17px;
    height: 240px;
    position: relative;
}

.timeline-tools {
    display: flex;
    align-items: center;
    height: 58px;
    padding: 0 25px;
    border-bottom: 2px solid #e4e6ea;
    position: relative;
}

.btn-group {
    display: flex;
    height: 26px;
    border: 1px solid #e1e4e9;
    border-radius: 3px;
}

.tool {
    display: flex;
    align-items: center;
    justify-content: center;
    width: 37px;
    color: #4a5360;
    font-size: 14px;
    font-weight: 500;
    border-left: 1px solid #e1e4e9;
}

.tool:first-child {
    border-left: none;
}

.tool svg {
    width: 12px;
    height: 12px;
}

.date-group {
    margin-left: 593px;
}

.tool.date {
    width: 95px;
    font-size: 12px;
    font-weight: 500;
    color: #3a424d;
}

.tools-right {
    display: flex;
    gap: 8px;
    margin-left: auto;
}

.tool.single {
    height: 26px;
    width: 38px;
    border: 1px solid #e1e4e9;
    border-radius: 3px;
}

.tool.single.narrow {
    width: 34px;
}

.tool.single .dark {
    width: 16px;
    height: 16px;
    color: #2f3338;
}

.g-row {
    display: flex;
    height: 36px;
}

.g-row.tall {
    height: 37px;
}

.g-head {
    height: 28px;
}

.g-res {
    flex: 0 0 324px;
    display: flex;
    align-items: center;
    padding-left: 21px;
    border-right: 2px solid #e1e4e9;
    border-bottom: 1px solid #eceef1;
    position: relative;
    font-weight: 500;
    color: #3a424d;
    font-size: 12px;
}

.g-head .g-res {
    border-right-width: 1px;
}

.tri {
    position: absolute;
    left: 6px;
    top: 11px;
    border-left: 8px solid #555;
    border-top: 4.500px solid transparent;
    border-bottom: 4.500px solid transparent;
}

.g-hours {
    flex: 1;
    display: flex;
    border-bottom: 1px solid #eceef1;
}

.g-hours span {
    flex: 0 0 159.300px;
    font-size: 10.5px;
    line-height: 28px;
    text-align: center;
    color: #4a5360;
    border-right: 1px solid #eceef1;
}

.g-hours span:last-child {
    flex: 1;
    border-right: none;
}

.g-lane {
    flex: 1;
    display: flex;
    align-items: flex-start;
    padding: 1px 2px 0 530px;
    border-bottom: 1px solid #eceef1;
    background-image: linear-gradient(to right, transparent 158.300px, #eceef1 158.300px);
    background-size: 159.300px 100%;
}

.bar {
    height: 21px;
    padding-left: 3px;
    border-left: 2px solid #b4b4b4;
    border-radius: 0 2px 2px 0;
    font-size: 11px;
    line-height: 21px;
    color: #333;
}

.bar.low {
    background-color: #fde4b9;
}

.bar.ok {
    background-color: #b2ffb8;
}

.bar.last {
    flex: 1;
}

/* overlays */

.expand-btn {
    position: absolute;
    left: 825px;
    top: 153px;
    display: flex;
    align-items: center;
    justify-content: center;
    width: 20px;
    height: 20px;
    border-radius: 50%;
    background-color: #fff;
    box-shadow: 0 1px 4px rgba(0, 0, 0, 0.3);
    color: #3a424d;
}

.expand-btn svg {
    width: 14px;
    height: 14px;
}

.corner-btn {
    position: absolute;
    left: 1624px;
    top: 668px;
    width: 22px;
    height: 22px;
    border-radius: 50%;
    background-color: #fff;
    border: 1px solid #d9dce2;
    clip-path: inset(0 9px 0 0);
}

.resize-grip {
    position: absolute;
    left: 426px;
    top: 396px;
    width: 10px;
    height: 32px;
    color: #c9ccd2;
}

.menu {
    position: absolute;
    left: 757px;
    top: 299px;
    width: 193px;
    background-color: #fff;
    border-radius: 3px;
    box-shadow: 0 4px 14px rgba(0, 0, 0, 0.35);
    z-index: 6;
}

.menu-title {
    height: 34px;
    padding-left: 16px;
    border-bottom: 1px solid #e1e4e9;
    font-weight: 500;
    line-height: 33px;
    letter-spacing: 0.4px;
    color: #3e4a5a;
}

.menu-section {
    border-bottom: 1px solid #e1e4e9;
}

.menu-section:last-child {
    border-bottom: none;
}

.menu-item {
    display: flex;
    align-items: center;
    height: 34px;
    padding-left: 16px;
    color: #4a5360;
    white-space: nowrap;
}

.menu-item svg {
    flex: none;
    width: 16px;
    height: 16px;
    margin-right: 16px;
    color: #2f3338;
}

.tooltip {
    position: absolute;
    left: 958px;
    top: 317px;
    width: 237px;
    height: 33px;
    padding: 1px 0 0 6px;
    background-color: #e3e3e3;
    border-radius: 2px;
    box-shadow: 0 1px 4px rgba(0, 0, 0, 0.25);
    font-family: Roboto, sans-serif;
    font-size: 12.2px;
    letter-spacing: 0;
    line-height: 15px;
    color: #555;
    white-space: nowrap;
    z-index: 6;
}

.mark {
    position: absolute;
    border: 4px solid #0bf01e;
    border-radius: 50%;
    z-index: 7;
}

.mark-kebab {
    left: 932px;
    top: 270px;
    width: 43px;
    height: 43px;
}

.mark-move {
    left: 750px;
    top: 605px;
    width: 188px;
    height: 39px;
}
```
